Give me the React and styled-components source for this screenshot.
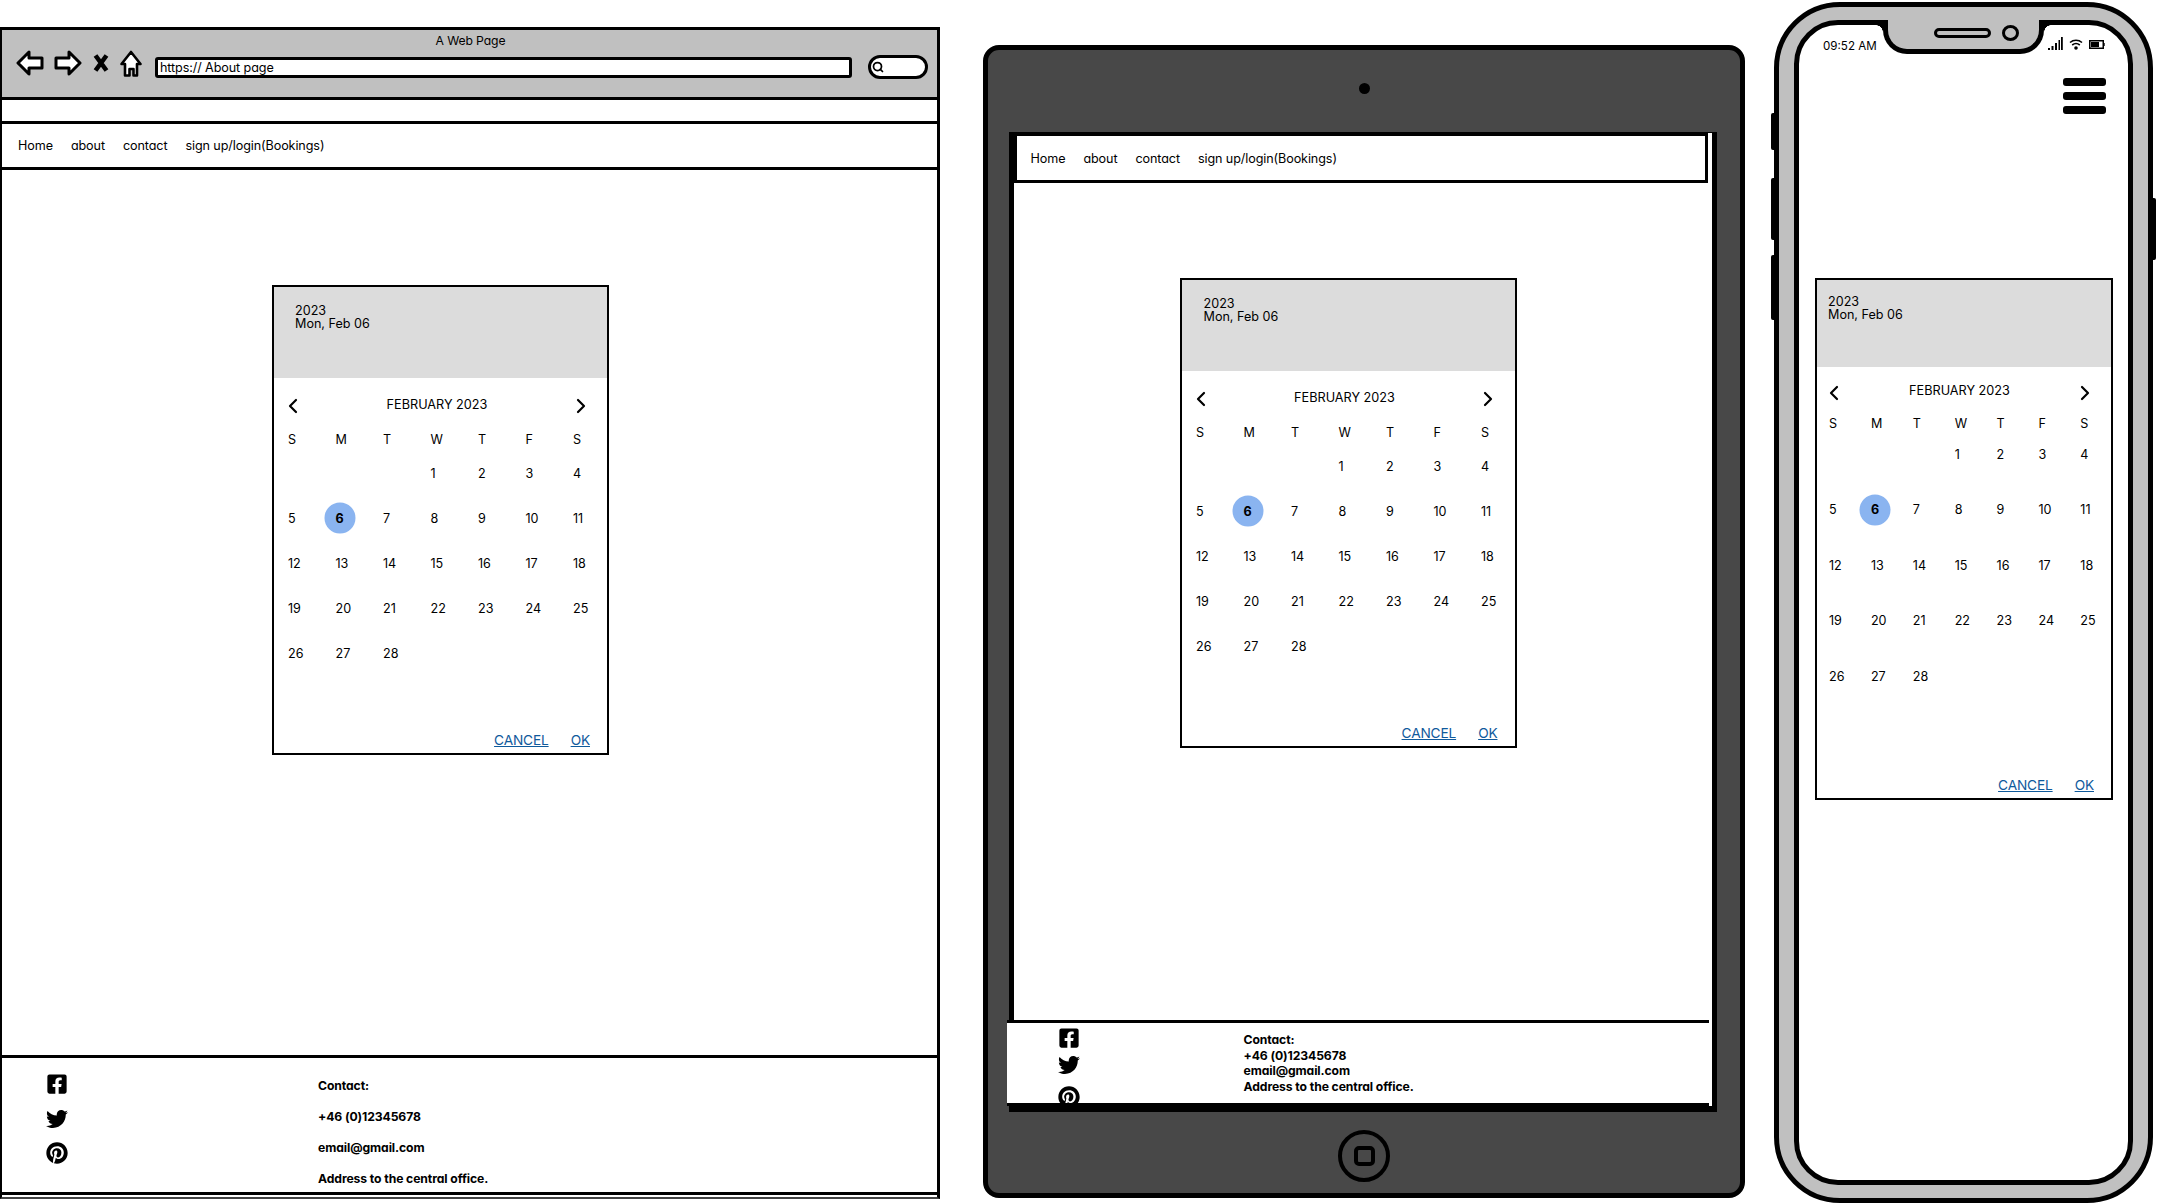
import React from "react";
import styled, { createGlobalStyle } from "styled-components";
import { ChevronLeft, ChevronRight, Search } from "lucide-react";
import { FaFacebookSquare, FaTwitter, FaPinterest } from "react-icons/fa";

const GlobalStyle = createGlobalStyle`
  html, body { margin: 0; padding: 0; background: #fff; }
  body { font-family: Inter, "Noto Sans", sans-serif; font-feature-settings: "cv11" 1; color: #000; }
  * { box-sizing: border-box; }
`;

const Page = styled.div`
  display: flex;
  align-items: flex-start;
  width: 2157px;
  height: 1204px;
  overflow: hidden;
`;

/* ---------- shared: nav, footer ---------- */
const NavBar = styled.nav`
  display: flex;
  align-items: center;
  gap: 18px;
  flex: none;
  height: ${(p) => p.$h}px;
  padding-left: ${(p) => p.$pad}px;
  background: #fff;
  border: 3px solid #000;
  border-width: ${(p) => p.$bw};
  font-size: 12.6px;
  letter-spacing: -0.1px;
`;
const NavLink = styled.span`white-space: nowrap;`;

const Nav = ({ h, pad, bw }) => (
  <NavBar $h={h} $pad={pad} $bw={bw}>
    <NavLink>Home</NavLink>
    <NavLink>about</NavLink>
    <NavLink>contact</NavLink>
    <NavLink>sign up/login(Bookings)</NavLink>
  </NavBar>
);

const FooterBar = styled.footer`
  display: flex;
  flex: none;
  height: ${(p) => p.$h}px;
  overflow: hidden;
  background: #fff;
  border-top: 3px solid #000;
  border-bottom: 3px solid #000;
  font-size: 12.2px;
  font-weight: 700;
  letter-spacing: -0.1px;
`;
const SocialColumn = styled.div`
  display: flex;
  flex-direction: column;
  flex: none;
  gap: ${(p) => p.$gap}px;
  width: ${(p) => p.$w}px;
  padding: ${(p) => p.$top}px 0 0 ${(p) => p.$left}px;
  font-size: 22px;
  line-height: 0;
  & > svg { flex: none; }
  & > svg:last-child { margin-top: ${(p) => p.$lastShift}px; }
`;
const ContactColumn = styled.div`
  padding-top: ${(p) => p.$top}px;
  line-height: ${(p) => p.$lh}px;
`;
const ContactLine = styled.div`white-space: nowrap;`;

const Footer = ({ h, social, contact }) => (
  <FooterBar $h={h}>
    <SocialColumn $w={social.w} $gap={social.gap} $top={social.top} $left={social.left} $lastShift={social.lastShift}>
      <FaFacebookSquare />
      <FaTwitter />
      <FaPinterest />
    </SocialColumn>
    <ContactColumn $top={contact.top} $lh={contact.lh}>
      <ContactLine>Contact:</ContactLine>
      <ContactLine>+46 (0)12345678</ContactLine>
      <ContactLine>email@gmail.com</ContactLine>
      <ContactLine>Address to the central office.</ContactLine>
    </ContactColumn>
  </FooterBar>
);

/* ---------- date picker ---------- */
const Card = styled.section`
  display: flex;
  flex-direction: column;
  flex: none;
  width: ${(p) => p.$c.w}px;
  height: ${(p) => p.$c.h}px;
  background: #fff;
  border: 2px solid #000;
  font-size: 12.6px;
`;
const CardHead = styled.header`
  flex: none;
  height: ${(p) => p.$c.head}px;
  padding: ${(p) => p.$c.headTop}px 0 0 ${(p) => p.$c.headPad}px;
  background: #dcdcdc;
  line-height: 13px;
`;
const MonthRow = styled.div`
  display: flex;
  justify-content: space-between;
  align-items: center;
  height: 32px;
  margin: ${(p) => p.$c.navTop}px 0 ${(p) => p.$c.navGap}px;
  padding: 0 ${(p) => p.$c.navR}px 0 ${(p) => p.$c.navL}px;
  & > svg { margin-top: 4px; }
`;
const MonthLabel = styled.span`font-size: 12.7px;`;
const WeekRow = styled.div`
  display: grid;
  grid-template-columns: repeat(7, ${(p) => p.$c.col}px);
  align-items: center;
  height: 24px;
  margin-bottom: ${(p) => p.$c.dayTop}px;
  padding-left: ${(p) => p.$c.padX}px;
`;
const DayGrid = styled.div`
  display: grid;
  grid-template-columns: repeat(7, ${(p) => p.$c.col}px);
  grid-auto-rows: 24px;
  row-gap: ${(p) => p.$c.rowGap}px;
  align-items: center;
  padding-left: ${(p) => p.$c.padX}px;
`;
const DayCell = styled.div`
  grid-column-start: ${(p) => p.$start || "auto"};
`;
const DayLabel = styled.span`
  position: relative;
  display: inline-block;
  isolation: isolate;
  font-weight: ${(p) => (p.$selected ? 700 : 400)};
  &::before {
    content: ${(p) => (p.$selected ? '""' : "none")};
    position: absolute;
    left: 50%;
    top: 50%;
    width: 31px;
    height: 31px;
    border-radius: 50%;
    background: #8ab4f0;
    transform: translate(-50%, -50%);
    z-index: -1;
  }
`;
const CardActions = styled.div`
  display: flex;
  justify-content: flex-end;
  gap: 22px;
  margin-top: auto;
  padding: 0 17px 5px 0;
  line-height: 16px;
`;
const ActionLink = styled.span`
  color: #0f5a9c;
  font-size: 13.7px;
  letter-spacing: -0.15px;
  text-decoration: underline;
`;

const WEEK = ["S", "M", "T", "W", "T", "F", "S"];
const DAYS = Array.from({ length: 28 }, (_, i) => i + 1);

const DatePicker = ({ c }) => (
  <Card $c={c}>
    <CardHead $c={c}>
      <div>2023</div>
      <div>Mon, Feb 06</div>
    </CardHead>
    <MonthRow $c={c}>
      <ChevronLeft size={24} strokeWidth={2.2} />
      <MonthLabel>FEBRUARY 2023</MonthLabel>
      <ChevronRight size={24} strokeWidth={2.2} />
    </MonthRow>
    <WeekRow $c={c}>
      {WEEK.map((d, i) => (
        <span key={i}>{d}</span>
      ))}
    </WeekRow>
    <DayGrid $c={c}>
      {DAYS.map((d) => (
        <DayCell key={d} $start={d === 1 ? 4 : undefined}>
          <DayLabel $selected={d === 6}>{d}</DayLabel>
        </DayCell>
      ))}
    </DayGrid>
    <CardActions>
      <ActionLink>CANCEL</ActionLink>
      <ActionLink>OK</ActionLink>
    </CardActions>
  </Card>
);

const CARD_WIDE = { w: 337, h: 470, head: 91, headTop: 16.5, headPad: 21, navTop: 10, navGap: 7, navL: 7, navR: 14, dayTop: 10, col: 47.5, rowGap: 21, padX: 14 };
const CARD_TABLET = { ...CARD_WIDE, headPad: 22, padX: 14.5 };
const CARD_PHONE = { w: 298, h: 522, head: 87, headTop: 15, headPad: 11, navTop: 8, navGap: 5, navL: 5, navR: 14, dayTop: 7, col: 41.9, rowGap: 31.4, padX: 12 };

/* ---------- desktop browser ---------- */
const Browser = styled.div`
  display: flex;
  flex-direction: column;
  flex: none;
  width: 940px;
  height: 1172px;
  margin-top: 27px;
  border-left: 2px solid #000;
  border-right: 3px solid #000;
  border-bottom: 2px solid #444;
`;
const Chrome = styled.div`
  flex: none;
  height: 73px;
  padding-top: 3px;
  background: #c0c0c0;
  border-top: 3px solid #000;
  border-bottom: 3px solid #000;
`;
const PageTitle = styled.div`
  height: 16px;
  line-height: 16px;
  margin-left: 2px;
  text-align: center;
  font-size: 12.2px;
  letter-spacing: -0.1px;
`;
const ToolRow = styled.div`
  display: flex;
  align-items: center;
  gap: 10px;
  height: 28px;
  padding: 0 9px 0 14px;
`;
const ToolIcon = styled.svg`flex: none; display: block;`;
const UrlBar = styled.div`
  flex: 1;
  display: flex;
  align-items: center;
  height: 21px;
  margin: 9px 0 0 3px;
  padding-left: 2px;
  background: #fff;
  border: 3px solid #000;
  border-radius: 3px;
  font-size: 12.6px;
  letter-spacing: -0.1px;
`;
const SearchPill = styled.div`
  flex: none;
  display: flex;
  align-items: center;
  width: 60px;
  height: 24px;
  margin: 8px 0 0 6px;
  padding-left: 1px;
  background: #fff;
  border: 3px solid #000;
  border-radius: 12px;
`;
const WhiteBand = styled.div`
  flex: none;
  height: 21px;
  background: #fff;
`;
const Viewport = styled.main`
  flex: 1;
  min-height: 0;
  padding: ${(p) => p.$top}px 0 0 ${(p) => p.$left}px;
  background: #fff;
`;
const FooterGap = styled.div`
  flex: none;
  height: 2px;
  background: #fff;
`;

const BrowserWindow = () => (
  <Browser>
    <Chrome>
      <PageTitle>A Web Page</PageTitle>
      <ToolRow>
        <ToolIcon width="28" height="26" viewBox="0 0 28 26">
          <path d="M2 13 13 2v6h13v10H13v6Z" fill="#fff" stroke="#000" strokeWidth="3" strokeLinejoin="round" />
        </ToolIcon>
        <ToolIcon width="28" height="26" viewBox="0 0 28 26">
          <path d="M26 13 15 2v6H2v10h13v6Z" fill="#fff" stroke="#000" strokeWidth="3" strokeLinejoin="round" />
        </ToolIcon>
        <ToolIcon width="18" height="18" viewBox="0 0 18 18">
          <path d="M3.5 1.5 14.5 16.5M14.5 1.5 3.5 16.5" stroke="#000" strokeWidth="4.6" fill="none" />
        </ToolIcon>
        <ToolIcon width="22" height="27" viewBox="0 0 22 27">
          <path d="M11 2 20.5 14H17v11.500h-3.500V19h-4v6.500H5V14H1.500Z" fill="#fff" stroke="#000" strokeWidth="2.600" strokeLinejoin="round" />
        </ToolIcon>
        <UrlBar>https:// About page</UrlBar>
        <SearchPill>
          <Search size={12} strokeWidth={3.5} />
        </SearchPill>
      </ToolRow>
    </Chrome>
    <WhiteBand />
    <Nav h={49} pad={16} bw="3px 0" />
    <Viewport $top={115} $left={270}>
      <DatePicker c={CARD_WIDE} />
    </Viewport>
    <Footer
      h={140}
      social={{ w: 316, gap: 12.5, top: 15, left: 44, lastShift: 0 }}
      contact={{ top: 11.5, lh: 31 }}
    />
    <FooterGap />
  </Browser>
);

/* ---------- tablet ---------- */
const Tablet = styled.div`
  display: flex;
  flex-direction: column;
  align-items: center;
  flex: none;
  width: 762px;
  height: 1153px;
  margin: 45px 0 0 43px;
  background: #484848;
  border: 5px solid #000;
  border-radius: 16px;
`;
const Camera = styled.div`
  flex: none;
  width: 11px;
  height: 11px;
  margin-top: 33px;
  border-radius: 50%;
  background: #000;
`;
const TabletScreen = styled.div`
  display: flex;
  flex-direction: column;
  flex: none;
  width: 708px;
  height: 980px;
  margin: 38px 3px 0 0;
  background: #fff;
  border: 5px solid #000;
  border-width: 1px 5px 6px;
`;
const TabletNavWrap = styled.div`
  flex: none;
  margin-right: 4px;
`;
const TabletFooterWrap = styled.div`
  flex: none;
  margin: 0 3px 0 -7px;
`;
const HomeButton = styled.div`
  display: flex;
  align-items: center;
  justify-content: center;
  flex: none;
  width: 52px;
  height: 52px;
  margin-top: 18px;
  border: 4.5px solid #000;
  border-radius: 50%;
`;
const HomeSquare = styled.div`
  width: 21px;
  height: 20px;
  border: 4px solid #000;
  border-radius: 5px;
`;

const TabletDevice = () => (
  <Tablet>
    <Camera />
    <TabletScreen>
      <TabletNavWrap>
        <Nav h={50} pad={14} bw="3px" />
      </TabletNavWrap>
      <Viewport $top={95} $left={166}>
        <DatePicker c={CARD_TABLET} />
      </Viewport>
      <TabletFooterWrap>
        <Footer
          h={86}
          social={{ w: 237, gap: 5, top: 4, left: 51, lastShift: 5 }}
          contact={{ top: 9, lh: 15.7 }}
        />
      </TabletFooterWrap>
    </TabletScreen>
    <HomeButton>
      <HomeSquare />
    </HomeButton>
  </Tablet>
);

/* ---------- phone ---------- */
const Phone = styled.div`
  position: relative;
  flex: none;
  width: 379px;
  height: 1201px;
  margin: 2px 0 0 29px;
  padding: 13px 15px;
  background: #c0c0c0;
  border: 5px solid #000;
  border-radius: 66px;
`;
const SideButton = styled.div`
  position: absolute;
  top: ${(p) => p.$top}px;
  ${(p) => p.$side}: -8px;
  width: 5px;
  height: ${(p) => p.$h}px;
  background: #000;
  border-radius: 2px;
`;
const PhoneScreen = styled.div`
  display: flex;
  flex-direction: column;
  height: 100%;
  background: #fff;
  border: 5px solid #000;
  border-radius: 44px;
`;
const StatusRow = styled.div`
  display: flex;
  align-items: flex-start;
  flex: none;
  height: 29px;
  padding-left: 24px;
`;
const ClockText = styled.span`
  width: 51px;
  margin: 13px 9px 0 0;
  font-size: 11.6px;
  line-height: 16px;
  white-space: nowrap;
`;
const Notch = styled.div`
  position: relative;
  display: flex;
  align-items: center;
  justify-content: center;
  gap: 11px;
  flex: none;
  width: 161px;
  height: 34px;
  margin-top: -5px;
  padding: 0 0 3px 26px;
  background: #c0c0c0;
  border: 5px solid #000;
  border-top: 0;
  border-radius: 0 0 24px 24px;
  &::before,
  &::after {
    content: "";
    position: absolute;
    top: 5px;
    width: 7px;
    height: 7px;
  }
  &::before {
    right: calc(100% + 5px);
    background: radial-gradient(circle at 0 100%, transparent 6.5px, #000 7px);
  }
  &::after {
    left: calc(100% + 5px);
    background: radial-gradient(circle at 100% 100%, transparent 6.5px, #000 7px);
  }
`;
const Speaker = styled.div`
  width: 57px;
  height: 10px;
  background: #c0c0c0;
  border: 3.5px solid #000;
  border-radius: 5px;
`;
const NotchCamera = styled.div`
  width: 17px;
  height: 16px;
  background: #c0c0c0;
  border: 3.5px solid #000;
  border-radius: 50%;
`;
const StatusIcons = styled.div`
  display: flex;
  align-items: center;
  gap: 6px;
  margin: 12px 0 0 4px;
`;
const MenuRow = styled.div`
  display: flex;
  justify-content: flex-end;
  flex: none;
  margin-top: 24px;
  padding-right: 22px;
`;
const Hamburger = styled.div`
  display: flex;
  flex-direction: column;
  gap: 6.500px;
  width: 43px;
`;
const HamburgerBar = styled.div`
  height: 7.500px;
  background: #000;
  border-radius: 3px;
`;
const PhoneCardWrap = styled.div`
  flex: none;
  margin: 164px 0 0 16px;
`;

const PhoneDevice = () => (
  <Phone>
    <SideButton $side="left" $top={106} $h={37} />
    <SideButton $side="left" $top={171} $h={62} />
    <SideButton $side="left" $top={248} $h={65} />
    <SideButton $side="right" $top={191} $h={62} />
    <PhoneScreen>
      <StatusRow>
        <ClockText>09:52 AM</ClockText>
        <Notch>
          <Speaker />
          <NotchCamera />
        </Notch>
        <StatusIcons>
          <svg width="15" height="14" viewBox="0 0 15 14">
            <path d="M0 11h2v2H0zM3.500 9h2v4h-2zM7 6h2v7H7zM10.500 3h1.500v10h-1.500zM13 0h1.800v13H13z" fill="#000" />
          </svg>
          <svg width="14" height="11" viewBox="0 0 14 11" fill="none" stroke="#000" strokeWidth="1.600">
            <path d="M1 3.500c3.500-3 8.500-3 12 0M3.200 6c2.300-1.800 5.300-1.800 7.600 0" />
            <circle cx="7" cy="9" r="1" fill="#000" />
          </svg>
          <svg width="16" height="9" viewBox="0 0 16 9">
            <rect x=".75" y=".75" width="13.500" height="7.500" fill="#fff" stroke="#000" strokeWidth="1.500" />
            <rect x="2" y="2" width="8" height="5" fill="#000" />
            <rect x="14.500" y="3" width="1.200" height="3" fill="#000" />
          </svg>
        </StatusIcons>
      </StatusRow>
      <MenuRow>
        <Hamburger>
          <HamburgerBar />
          <HamburgerBar />
          <HamburgerBar />
        </Hamburger>
      </MenuRow>
      <PhoneCardWrap>
        <DatePicker c={CARD_PHONE} />
      </PhoneCardWrap>
    </PhoneScreen>
  </Phone>
);

export default function App() {
  return (
    <>
      <GlobalStyle />
      <Page>
        <BrowserWindow />
        <TabletDevice />
        <PhoneDevice />
      </Page>
    </>
  );
}
